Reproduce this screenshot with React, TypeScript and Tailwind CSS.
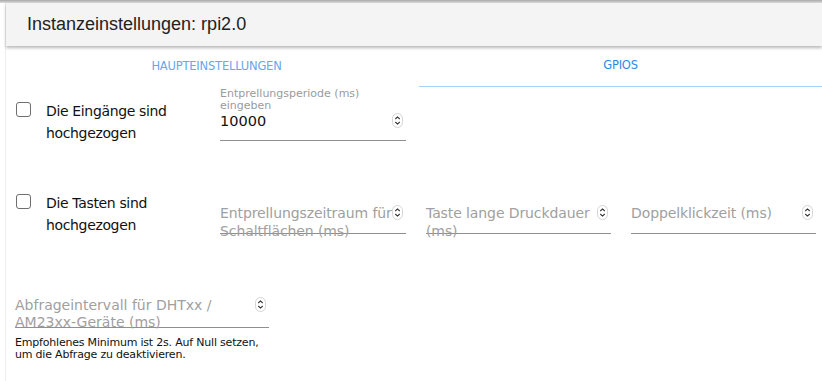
import React from "react";

const Spinner = () => (
  <svg width="11" height="15" viewBox="0 0 11 15" fill="none">
    <rect x="0.5" y="0.5" width="10" height="14" rx="5" fill="#fff" stroke="#d4d4d4" />
    <path d="M3.3 6 L5.5 3.9 L7.7 6" stroke="#333" strokeWidth="1.1" fill="none" />
    <path d="M3.3 9 L5.5 11.1 L7.7 9" stroke="#333" strokeWidth="1.1" fill="none" />
  </svg>
);

const Checkbox = ({ className }: { className: string }) => (
  <div className={"w-[15px] h-[15px] shrink-0 rounded-[3px] border border-[#6e6e6e] bg-white " + className} />
);

const GrayField = ({ w, text }: { w: string; text: React.ReactNode }) => (
  <div className={"relative h-[30px] border-b border-[#8f8f8f] " + w}>
    <div className="absolute left-0 top-0 text-[14px] leading-[18px] text-[#a0a0a0] tracking-[-0.1px]">{text}</div>
    <div className="absolute right-[3px] top-[1px]">
      <Spinner />
    </div>
  </div>
);

export default function App() {
  return (
    <div
      className="w-[822px] h-[381px] bg-white overflow-hidden text-[#1b1b1b]"
      style={{ fontFamily: '"DejaVu Sans", sans-serif' }}
    >
      <div className="h-[3px] bg-gradient-to-b from-[#a8a8a8] to-[#dedede]" />
      <div className="ml-[5px] h-[378px] border-l border-[#ededed] flex flex-col">
        <div className="h-[43px] shrink-0 bg-[#f4f4f4] shadow-[0_2px_3px_rgba(0,0,0,0.28)] flex items-center pl-[21px] relative z-10">
          <span className="text-[18px] text-[#222]" style={{ fontFamily: '"Liberation Sans", Arial, sans-serif' }}>
            Instanzeinstellungen: rpi2.0
          </span>
        </div>
        <div className="h-[41px] shrink-0 flex text-[11.5px] tracking-[-0.2px]">
          <div className="w-[413px] flex items-center justify-center pl-[8px] text-[#66a7ee]">HAUPTEINSTELLUNGEN</div>
          <div className="flex-1 flex items-center justify-center border-b border-[#a6d2f8] text-[#2d8ae0]">GPIOS</div>
        </div>

        <div className="h-[100px] shrink-0 flex items-start pl-[10px]">
          <div className="w-[204px] flex items-start">
            <Checkbox className="mt-[15px]" />
            <div className="ml-[15px] mt-[13px] text-[14px] leading-[22px] tracking-[-0.35px] text-[#111]">
              Die Eingänge sind
              <br />
              hochgezogen
            </div>
          </div>
          <div className="w-[186px] mt-[1px] relative border-b border-[#8f8f8f] pb-[10px]">
            <div className="text-[11px] leading-[12px] text-[#9b9b9b]">
              Entprellungsperiode (ms)
              <br />
              eingeben
            </div>
            <div className="text-[14.5px] leading-[18px] text-[#111]">10000</div>
            <div className="absolute right-[3px] top-[25px]">
              <Spinner />
            </div>
          </div>
        </div>

        <div className="h-[100px] shrink-0 flex items-start pl-[10px]">
          <div className="w-[204px] flex items-start">
            <Checkbox className="mt-[7px]" />
            <div className="ml-[15px] mt-[5px] text-[14px] leading-[22px] tracking-[-0.35px] text-[#111]">
              Die Tasten sind
              <br />
              hochgezogen
            </div>
          </div>
          <div className="mt-[17px] flex gap-[20px]">
            <GrayField
              w="w-[186px]"
              text={
                <>
                  Entprellungszeitraum für
                  <br />
                  Schaltflächen (ms)
                </>
              }
            />
            <GrayField
              w="w-[185px]"
              text={
                <>
                  Taste lange Druckdauer
                  <br />
                  (ms)
                </>
              }
            />
            <GrayField w="w-[185px]" text="Doppelklickzeit (ms)" />
          </div>
        </div>

        <div className="pl-[9px] pt-[10px]">
          <div className="relative w-[254px] h-[31px] border-b border-[#8f8f8f]">
            <div className="absolute left-0 top-0 text-[14px] leading-[17px] text-[#a0a0a0]">
              Abfrageintervall für DHTxx /
              <br />
              AM23xx-Geräte (ms)
            </div>
            <div className="absolute right-[3px] top-[0px]">
              <Spinner />
            </div>
          </div>
          <div className="mt-[9px] text-[11px] leading-[12px] text-[#111] tracking-[-0.2px]">
            Empfohlenes Minimum ist 2s. Auf Null setzen,
            <br />
            um die Abfrage zu deaktivieren.
          </div>
        </div>
      </div>
    </div>
  );
}
